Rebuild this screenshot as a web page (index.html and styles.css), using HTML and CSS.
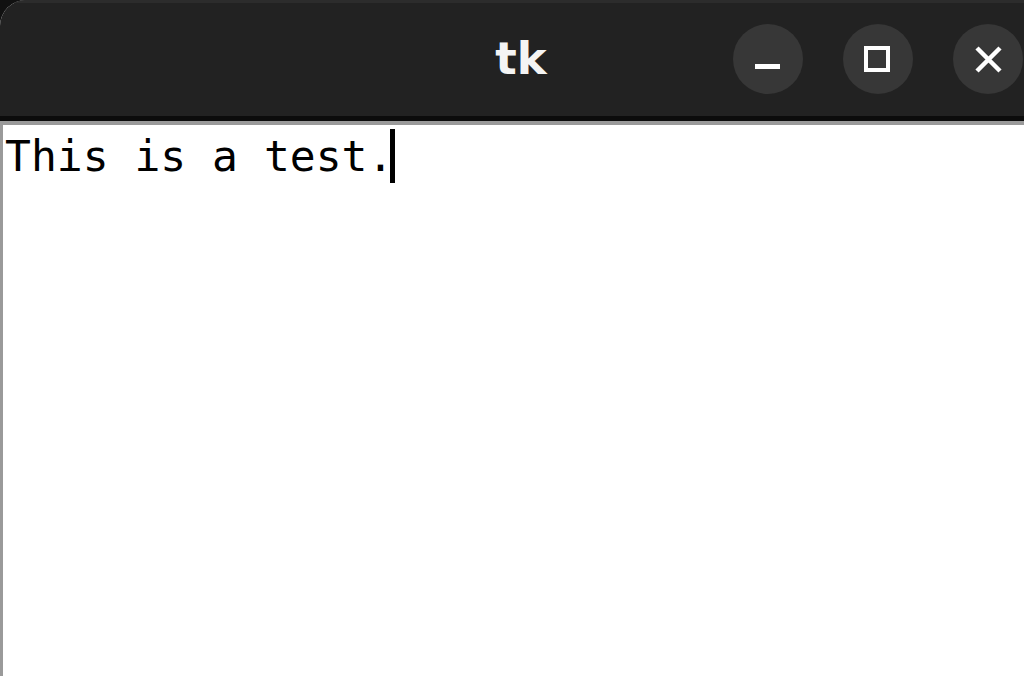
FILE: index.html
```html
<!DOCTYPE html>
<html>
<head>
<meta charset="utf-8">
<link rel="stylesheet" href="styles.css">
</head>
<body>
<div class="window">
  <header class="titlebar">
    <div class="title">tk</div>
    <div class="controls">
      <button class="ctl" aria-label="Minimize">
        <svg width="70" height="70" viewBox="0 0 70 70"><rect x="22" y="40" width="25" height="5" fill="#fff"/></svg>
      </button>
      <button class="ctl" aria-label="Maximize">
        <svg width="70" height="70" viewBox="0 0 70 70"><rect x="23" y="24" width="22" height="22" fill="none" stroke="#fff" stroke-width="4"/></svg>
      </button>
      <button class="ctl" aria-label="Close">
        <svg width="70" height="70" viewBox="0 0 70 70"><path d="M24 24 L47 47 M47 24 L24 47" stroke="#fff" stroke-width="4.5" fill="none"/></svg>
      </button>
    </div>
  </header>
  <div class="rule"></div>
  <main class="textarea">
    <div class="line">This is a test.<span class="caret"></span></div>
  </main>
</div>
</body>
</html>
```

FILE: styles.css
```css
html, body {
  margin: 0;
  padding: 0;
  background: #111;
  overflow: hidden;
  height: 676px;
}
.window {
  width: 1042px;
  height: 676px;
  display: flex;
  flex-direction: column;
  background: #fff;
  border-top-left-radius: 26px;
  overflow: hidden;
}
.titlebar {
  position: relative;
  height: 113px;
  background: #222222;
  border-top: 3px solid #2c2c2c;
  display: flex;
  align-items: center;
  justify-content: flex-end;
  padding-right: 19px;
  flex-shrink: 0;
}
.title {
  position: absolute;
  left: 0;
  right: 0;
  top: 0;
  bottom: 0;
  display: flex;
  align-items: center;
  justify-content: center;
  font-family: "DejaVu Sans", sans-serif;
  font-weight: bold;
  font-size: 45px;
  color: #f4f4f4;
  padding-bottom: 2px;
}
.controls {
  position: relative;
  display: flex;
  gap: 40px;
  align-items: center;
  margin-top: -2px;
}
.ctl {
  width: 70px;
  height: 70px;
  border: 0;
  padding: 0;
  border-radius: 50%;
  background: #373737;
  display: block;
}
.ctl svg { display: block; }
.rule {
  height: 5px;
  background: #0c0c0c;
  flex-shrink: 0;
}
.textarea {
  flex: 1;
  border-top: 4px solid #9a9a9a;
  border-left: 3px solid #9a9a9a;
  padding: 4px 0 0 2px;
  background: #fff;
}
.line {
  font-family: "DejaVu Sans Mono", monospace;
  font-size: 43px;
  line-height: 54px;
  height: 54px;
  color: #000;
  white-space: pre;
}
.caret {
  display: inline-block;
  width: 5px;
  height: 54px;
  background: #000;
  margin-left: -3px;
  vertical-align: top;
}
```
